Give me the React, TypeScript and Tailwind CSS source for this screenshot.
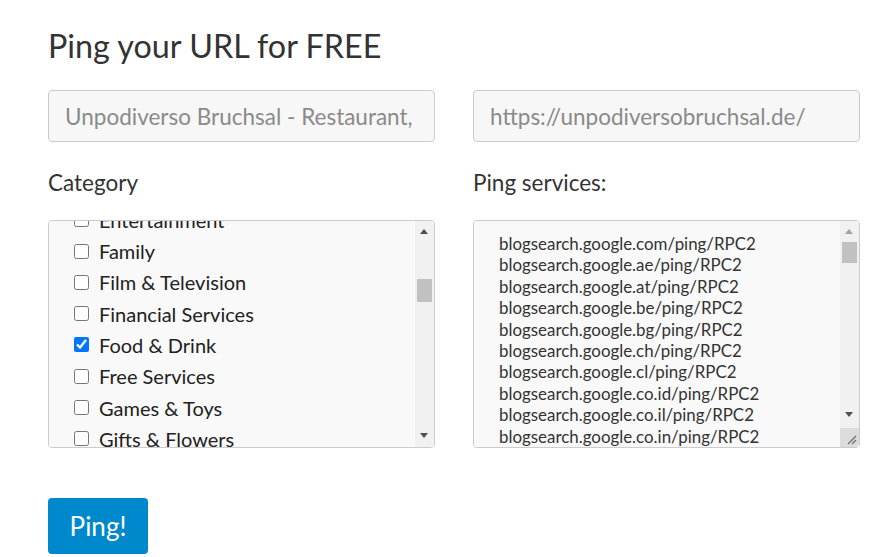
import { useEffect, useRef } from 'react';

const categories = [
  'Arts & Culture', 'Automotive', 'Beauty', 'Blogs', 'Books & Literature', 'Business',
  'Careers', 'Computers', 'Dating', 'Design', 'Education', 'Electronics', 'Employment',
  'Energy', 'Entertainment', 'Family', 'Film & Television', 'Financial Services',
  'Food & Drink', 'Free Services', 'Games & Toys', 'Gifts & Flowers', 'Government',
  'Health', 'Hobbies', 'Home & Garden', 'Humor', 'Internet', 'Jobs', 'Kids', 'Law',
  'Lifestyle', 'Marketing', 'Media', 'Medical', 'Military', 'Movies', 'Music', 'News',
  'Non-Profit', 'Office Supplies', 'Outdoors', 'Parenting', 'Personal', 'Pets',
  'Photography', 'Politics', 'Real Estate', 'Recreation', 'Reference', 'Religion',
  'Science', 'Search Engines', 'Shopping', 'Society', 'Software', 'Sports', 'Technology',
  'Telecommunications', 'Travel', 'Vehicles', 'Web Design', 'Web Hosting', 'Other',
];

const domains = [
  'com', 'ae', 'at', 'be', 'bg', 'ch', 'cl', 'co.id', 'co.il', 'co.in', 'co.jp', 'co.kr',
  'co.nz', 'co.th', 'co.uk', 'co.ve', 'co.za', 'com.ar', 'com.au', 'com.br', 'com.co',
  'com.do', 'com.mx', 'com.my', 'com.pe', 'com.sa', 'com.sg', 'com.tr', 'com.tw', 'com.ua',
  'com.uy', 'com.vn', 'de', 'es', 'fi', 'fr', 'gr', 'hr', 'ie', 'in', 'it', 'jp', 'ki',
  'nl', 'pl', 'pt', 'ro', 'ru', 'se', 'sk', 'us',
];

const others = [
  'rpc.pingomatic.com', 'ping.blo.gs', 'ping.feedburner.com', 'ping.syndic8.com',
  'rpc.weblogs.com/RPC2', 'blog.with2.net/ping.php', 'blogping.unidatum.com/RPC2',
  'blogpingr.de/ping/rpc2', 'bulkfeeds.net/rpc', 'ping.bitacoras.com',
  'ping.blogs.yandex.ru/RPC2', 'ping.fc2.com', 'ping.rss.drecom.jp', 'pingoat.com/goat/RPC2',
  'rpc.blogbuzzmachine.com/RPC2', 'rpc.blogrolling.com/pinger', 'rpc.twingly.com',
  'services.newsgator.com/ngws/xmlrpcping.aspx', 'www.blogpeople.net/servlet/weblogUpdates',
  'www.feedsubmitter.com', 'www.newsisfree.com/xmlrpctest.php', 'www.pingerati.net',
  'www.pingmyblog.com', 'xping.pubsub.com/ping', 'api.feedster.com/ping', 'api.moreover.com/RPC2',
  'api.my.yahoo.com/RPC2', 'bblog.com/ping.php', 'blogdb.jp/xmlrpc', 'blogmatcher.com/u.php',
  'coreblog.org/ping', 'ping.weblogalot.com/rpc.php', 'ping.exblog.jp/xmlrpc',
  'pingqueue.com/rpc', 'rpc.icerocket.com:10080', 'topicexchange.com/RPC2',
  'www.blogdigger.com/RPC2', 'www.blogshares.com/rpc.php', 'www.blogsnow.com/ping',
  'www.weblogues.com/RPC',
];

const services = [...domains.map((d) => `blogsearch.google.${d}/ping/RPC2`), ...others].join('\n');

// drawn scrollbar, sits over the right edge of a box
function Scrollbar({ thumbTop, thumbHeight, upColor, downTop, corner }: {
  thumbTop: number; thumbHeight: number; upColor: string; downTop: number; corner?: boolean;
}) {
  return (
    <div className="pointer-events-none absolute bottom-[1px] right-[1px] top-[1px] w-[19px] rounded-r bg-[#f1f1f1]">
      <span
        className="absolute left-[5px] top-[8px] h-0 w-0 border-x-[4.5px] border-b-[5px] border-x-transparent"
        style={{ borderBottomColor: upColor }}
      />
      <div className="absolute left-[2px] w-[15px] bg-[#c1c1c1]" style={{ top: thumbTop, height: thumbHeight }} />
      <span
        className="absolute left-[5px] h-0 w-0 border-x-[4.5px] border-t-[5px] border-x-transparent border-t-[#505050]"
        style={{ top: downTop }}
      />
      {corner && (
        <div className="absolute bottom-0 left-0 h-[19px] w-[19px] rounded-br bg-[#dcdcdc]">
          <svg width="19" height="19" viewBox="0 0 19 19" className="absolute left-0 top-0">
            <path d="M16 8 L8 16 M16 12 L12 16" stroke="#6b6b6b" strokeWidth="1.2" />
          </svg>
        </div>
      )}
    </div>
  );
}

export default function App() {
  const listRef = useRef<HTMLDivElement>(null);

  useEffect(() => {
    if (listRef.current) listRef.current.scrollTop = 8 + 31.3 * 14 + 17;
  }, []);

  return (
    <div className="min-h-[557px] bg-white px-12 pt-[26px] text-[#333] [font-family:Lato,'Noto_Sans',sans-serif]">
      <h1 className="text-[32.3px] leading-[40px] text-[#333]">Ping your URL for FREE</h1>

      <div className="mt-[24px] grid w-[812px] grid-cols-2 gap-x-[38px]">
        <input
          className="h-[52px] rounded border border-[#cccccc] bg-[#f7f7f7] px-4 text-[22.5px] text-[#8a8a8a] outline-none"
          defaultValue="Unpodiverso Bruchsal - Restaurant, Bar & Café"
        />
        <input
          className="h-[52px] rounded border border-[#cccccc] bg-[#f7f7f7] px-4 text-[22.5px] text-[#8a8a8a] outline-none"
          defaultValue="https://unpodiversobruchsal.de/"
        />

        <label className="mt-[27px] text-[22.5px] leading-[28px] text-[#333]">Category</label>
        <label className="mt-[27px] text-[22.5px] leading-[28px] text-[#333]">Ping services:</label>

        {/* Category list */}
        <div className="relative mt-[23px]">
          <div
            ref={listRef}
            className="h-[228px] overflow-y-scroll rounded border border-[#cccccc] bg-[#f9f9f9] py-2"
          >
            {categories.map((c) => (
              <label key={c} className="flex h-[31.3px] items-center gap-[10px] pl-[25px] text-[20px] text-[#222]">
                <input type="checkbox" defaultChecked={c === 'Food & Drink'} className="m-0 h-[15px] w-[15px]" />
                {c}
              </label>
            ))}
          </div>
          <Scrollbar thumbTop={58} thumbHeight={23} upColor="#505050" downTop={212} />
        </div>

        {/* Ping services */}
        <div className="relative mt-[23px]">
          <textarea
            readOnly
            className="block h-[228px] w-full resize-none overflow-y-scroll whitespace-pre rounded border border-[#cccccc] bg-[#f9f9f9] px-[25px] py-[12px] text-[16.9px] leading-[21.4px] text-[#333] outline-none"
            defaultValue={services}
          />
          <Scrollbar thumbTop={21} thumbHeight={21} upColor="#a3a3a3" downTop={191} corner />
        </div>
      </div>

      <button className="mt-[50px] h-14 w-[100px] rounded bg-[#0088cc] text-[26px] text-white">Ping!</button>
    </div>
  );
}
